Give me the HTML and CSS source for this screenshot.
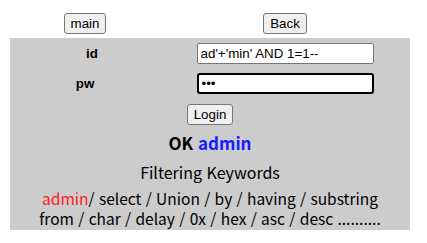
FILE: index.html
```html
<!DOCTYPE html>
<html lang="ko">
<head>
    <meta charset="UTF-8">
    <title>Login</title>
    <link rel="stylesheet" href="styles.css">
</head>
<body>
    <div class="page">
        <div class="nav-row">
            <div class="cell"><button class="btn">main</button></div>
            <div class="cell"><button class="btn">Back</button></div>
        </div>

        <div class="panel">
            <div class="form-row">
                <div class="cell label">id</div>
                <div class="cell"><input type="text" class="field" value="ad'+'min' AND 1=1--"></div>
            </div>
            <div class="form-row">
                <div class="cell label">pw</div>
                <div class="cell"><input type="password" class="field focused" value="123"></div>
            </div>
            <div class="login-row">
                <button class="btn">Login</button>
            </div>
            <div class="result">OK <span class="user">admin</span></div>
            <div class="filter-title">Filtering Keywords</div>
            <div class="filter-list">
                <span class="hit">admin</span>/ select / Union / by / having / substring<br>
                from / char / delay / 0x / hex / asc / desc ..........
            </div>
        </div>
    </div>
</body>
</html>
```

FILE: styles.css
```css
body {
    margin: 0;
    background: #fff;
    font-family: "Noto Sans CJK KR", "Noto Sans", sans-serif;
    color: #000;
}

.page {
    width: 400px;
    padding: 12px 10px;
}

.nav-row,
.form-row {
    display: grid;
    grid-template-columns: 150px 250px;
    align-items: center;
}

.nav-row {
    height: 21px;
    margin-top: 1px;
}

.cell {
    display: flex;
    justify-content: center;
    align-items: center;
}

.btn {
    font-family: "Liberation Sans", Arial, sans-serif;
    font-size: 13.33px;
    padding: 1px 6px;
    height: 21px;
    background: #efefef;
    border: 1px solid #767676;
    border-radius: 3px;
    color: #000;
}

.panel {
    margin-top: 4px;
    background: #cccccc;
    padding: 0 0 2px;
    height: 190px;
}

.form-row {
    height: 30px;
}

.label {
    font-family: "Liberation Sans", Arial, sans-serif;
    font-weight: bold;
    font-size: 13.33px;
}

.form-row:first-child .label {
    padding-left: 14px;
}

.field {
    box-sizing: border-box;
    width: 177px;
    height: 21px;
    margin: 0;
    padding: 1px 3px;
    font-family: "Liberation Sans", Arial, sans-serif;
    font-size: 13.33px;
    background: #fff;
    border: 1px solid #767676;
    border-radius: 2px;
}

.field.focused {
    border: 2px solid #000;
    border-radius: 3px;
}

.login-row {
    display: flex;
    justify-content: center;
    margin-top: 6px;
}

.result {
    text-align: center;
    font-weight: bold;
    font-size: 17px;
    margin-top: 6px;
    line-height: 24px;
}

.user {
    color: #1a1aff;
}

.filter-title {
    text-align: center;
    font-size: 16px;
    line-height: 22px;
    margin-top: 6px;
}

.filter-list {
    text-align: center;
    font-size: 15.5px;
    line-height: 20px;
    margin-top: 5px;
}

.hit {
    color: #ff1a1a;
}
```
